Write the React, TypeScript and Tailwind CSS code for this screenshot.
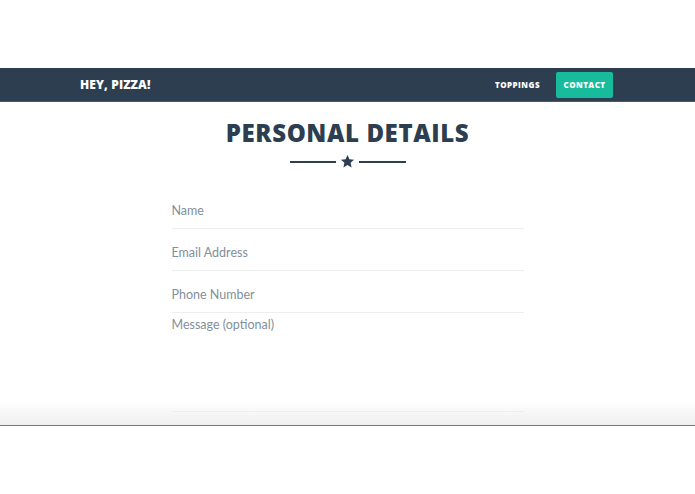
import React from "react";

const fields = ["Name", "Email Address", "Phone Number"];

const Star = () => (
  <svg viewBox="0 0 24 24" className="h-[15px] w-[15px] fill-[#2c3e50]">
    <path d="M12 1.5l3.1 6.9 7.4.7-5.6 5 1.7 7.4L12 17.6l-6.6 3.9 1.7-7.4-5.6-5 7.4-.7z" />
  </svg>
);

export default function App() {
  return (
    <div className="min-h-screen bg-white font-['Lato',sans-serif]">
      <div className="h-[68px]" />

      {/* Navbar */}
      <nav className="flex h-[34px] items-center justify-between border-b border-[#4a5a6a] bg-[#2c3e50] pl-[80px] pr-[82px]">
        <span className="font-['Open_Sans',sans-serif] text-[12px] font-extrabold tracking-[0.01em] text-white">
          HEY, PIZZA!
        </span>
        <div className="flex items-center">
          <span className="mr-[16px] font-['Open_Sans',sans-serif] text-[8px] font-extrabold tracking-[0.06em] text-white">
            TOPPINGS
          </span>
          <span className="flex h-[26px] w-[57px] items-center justify-center rounded-[2px] bg-[#18bc9c] font-['Open_Sans',sans-serif] text-[8px] font-extrabold tracking-[0.06em] text-white">
            CONTACT
          </span>
        </div>
      </nav>

      {/* Content */}
      <section className="relative flex h-[324px] flex-col items-center border-b border-[#777] bg-white">
        <h1 className="mt-[15px] font-['Open_Sans',sans-serif] text-[24px] font-extrabold leading-[32px] tracking-[0.025em] text-[#2c3e50]">
          PERSONAL DETAILS
        </h1>
        <div className="mt-[5px] flex items-center gap-[4px]">
          <div className="h-[2px] w-[46px] bg-[#2c3e50]" />
          <Star />
          <div className="h-[2px] w-[47px] bg-[#2c3e50]" />
        </div>

        {/* Form */}
        <form className="mt-[18px] flex w-[352px] flex-col">
          {fields.map((f) => (
            <div key={f} className="flex h-[42px] items-start border-b border-[#eeeeee] pt-[16px]">
              <span className="text-[12.5px] leading-[16px] text-[#848f9a]">{f}</span>
            </div>
          ))}
          <div className="flex h-[99px] items-start border-b border-[#eeeeee] pt-[4px]">
            <span className="text-[12.5px] leading-[16px] text-[#848f9a]">Message (optional)</span>
          </div>
        </form>

        {/* bottom shadow */}
        <div className="pointer-events-none absolute inset-x-0 bottom-0 h-[24px] bg-gradient-to-b from-transparent to-[#efefef]" />
      </section>
    </div>
  );
}
